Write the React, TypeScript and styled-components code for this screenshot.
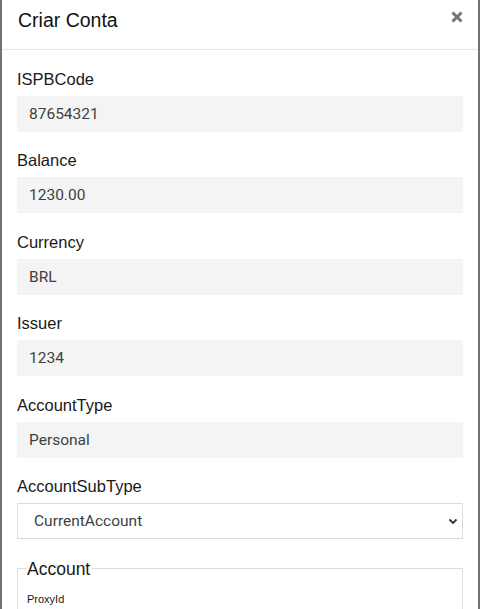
import React from "react";
import styled, { createGlobalStyle } from "styled-components";

const GlobalStyle = createGlobalStyle`
  html, body {
    margin: 0;
    padding: 0;
    background: #ffffff;
  }
  body {
    font-family: "Liberation Sans", Arial, sans-serif;
    color: #222;
  }
`;

const Modal = styled.div`
  width: 480px;
  min-height: 609px;
  box-sizing: border-box;
  border-left: 2px solid #737373;
  border-right: 2px solid #737373;
  background: #fff;
  overflow: hidden;
`;

const Header = styled.div`
  height: 50px;
  box-sizing: border-box;
  padding: 9px 15px 0 16px;
  border-bottom: 1px solid #e5e5e5;
  display: flex;
  justify-content: space-between;
  align-items: flex-start;
`;

const Title = styled.h4`
  margin: 0;
  font-size: 19.5px;
  font-weight: 400;
  line-height: 23px;
  color: #111;
`;

const CloseButton = styled.button`
  border: 0;
  background: none;
  padding: 0;
  margin: 2px 0 0 0;
  width: 12px;
  height: 12px;
  display: flex;
  cursor: pointer;
`;

const Body = styled.form`
  padding: 17.5px 15px 0 15px;
`;

const Group = styled.div`
  margin-bottom: 17.5px;
`;

const Label = styled.label`
  display: block;
  font-size: 16.5px;
  line-height: 23px;
  margin-bottom: 5px;
  color: #1a1a1a;
`;

const Input = styled.input`
  display: block;
  width: 100%;
  height: 36px;
  box-sizing: border-box;
  border: 0;
  background: #f4f4f4;
  padding: 0 12px;
  font-family: Roboto, "Liberation Sans", sans-serif;
  font-size: 15.5px;
  color: #3f3f3f;
  outline: none;
`;

const SelectWrap = styled.div`
  position: relative;
`;

const Select = styled.select`
  display: block;
  width: 100%;
  height: 36px;
  box-sizing: border-box;
  appearance: none;
  border: 1px solid #dcdcdc;
  border-radius: 0;
  background: #fff;
  padding: 0 16px;
  font-family: Roboto, "Liberation Sans", sans-serif;
  font-size: 15.5px;
  color: #3f3f3f;
  outline: none;
`;

const Chevron = styled.svg`
  position: absolute;
  right: 5px;
  top: 15px;
  pointer-events: none;
`;

const Fieldset = styled.fieldset`
  margin: 0;
  padding: 0 9px 20px 9px;
  border: 1px solid #dedede;
  min-width: 0;
`;

const Legend = styled.legend`
  padding: 0 2px 0 0;
  font-size: 17.5px;
  line-height: 24px;
  color: #1a1a1a;
`;

const SmallLabel = styled.label`
  display: block;
  margin-top: 10px;
  font-size: 11px;
  line-height: 16px;
  color: #1a1a1a;
`;

const fields = [
  { label: "ISPBCode", value: "87654321" },
  { label: "Balance", value: "1230.00" },
  { label: "Currency", value: "BRL" },
  { label: "Issuer", value: "1234" },
  { label: "AccountType", value: "Personal" },
];

export default function App() {
  return (
    <>
      <GlobalStyle />
      <Modal>
        <Header>
          <Title>Criar Conta</Title>
          <CloseButton type="button" aria-label="Close">
            <svg width="12" height="12" viewBox="0 0 12 12">
              <path
                d="M1.5 1.5 L10.5 10.5 M10.5 1.5 L1.5 10.5"
                stroke="#757575"
                strokeWidth="3"
                strokeLinecap="butt"
              />
            </svg>
          </CloseButton>
        </Header>
        <Body onSubmit={(e) => e.preventDefault()}>
          {fields.map((f) => (
            <Group key={f.label}>
              <Label>{f.label}</Label>
              <Input defaultValue={f.value} readOnly />
            </Group>
          ))}
          <Group>
            <Label>AccountSubType</Label>
            <SelectWrap>
              <Select defaultValue="CurrentAccount">
                <option value="CurrentAccount">CurrentAccount</option>
                <option value="SavingsAccount">SavingsAccount</option>
              </Select>
              <Chevron width="10" height="7" viewBox="0 0 10 7">
                <path
                  d="M1.5 1.5 L5 5 L8.5 1.5"
                  fill="none"
                  stroke="#333"
                  strokeWidth="1.8"
                />
              </Chevron>
            </SelectWrap>
          </Group>
          <Fieldset>
            <Legend>Account</Legend>
            <SmallLabel>ProxyId</SmallLabel>
          </Fieldset>
        </Body>
      </Modal>
    </>
  );
}
